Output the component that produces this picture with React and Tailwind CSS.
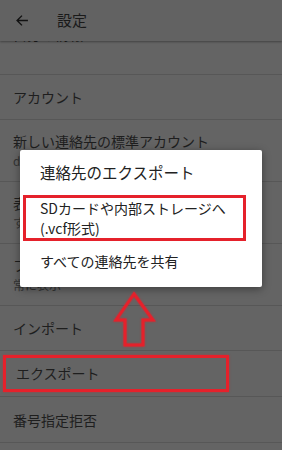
import React from "react";

const font = { fontFamily: '"Noto Sans CJK JP", "Noto Sans", sans-serif' };

function Row({ title, sub, h = "h-[45px]" }) {
  return (
    <div className={`${h} border-b border-[#575757] flex flex-col justify-center pl-[13px]`}>
      <div className="text-[14px] leading-[18px] text-[#1e1e1e]">{title}</div>
      {sub && <div className="text-[12px] leading-[16px] text-[#333] mt-[3px]">{sub}</div>}
    </div>
  );
}

export default function App() {
  return (
    <div style={font} className="relative w-[282px] h-[450px] overflow-hidden bg-[#646464]">
      <div className="relative z-10 h-[41px] bg-[#626262] flex items-center shadow-[0_1px_2px_rgba(0,0,0,0.35)]">
        <svg className="ml-[16px]" width="13" height="13" viewBox="0 0 24 24" fill="none" stroke="#111" strokeWidth="2.6">
          <path d="M22 12H3M11 3l-9 9 9 9" />
        </svg>
        <div className="ml-[28px] text-[15px] text-[#1a1a1a]">設定</div>
      </div>
      <div className="h-[34px] border-b border-[#575757] overflow-hidden relative">
        <div className="absolute left-[13px] top-[-16px] text-[14px] leading-[18px] text-[#1e1e1e]">自分の情報</div>
      </div>
      <Row title="アカウント" />
      <Row title="新しい連絡先の標準アカウント" sub="d●●●●●@gmail.com" h="h-[62px]" />
      <Row title="表示する連絡先" sub="すべての連絡先" h="h-[62px]" />
      <Row title="フォネティック名" sub="常に表示" h="h-[62px]" />
      <Row title="インポート" />
      <div className="h-[46px] border-b border-[#575757] flex items-center pl-[3px]">
        <div className="w-[226px] h-[37px] border-[3px] border-[#e5212b] flex items-center pl-[10px] text-[14px] text-[#1e1e1e] shadow-[0_0_2px_rgba(229,33,43,0.6)]">
          エクスポート
        </div>
      </div>
      <Row title="番号指定拒否" h="h-[46px]" />

      {/* dialog */}
      <div className="absolute left-[20px] top-[150px] w-[242px] h-[137px] bg-white shadow-[0_2px_8px_rgba(0,0,0,0.4)] rounded-[2px]">
        <div className="pl-[20px] pt-[12px] text-[15.5px] leading-[20px] text-[#222]">連絡先のエクスポート</div>
        <div className="ml-[3px] mt-[13px] w-[223px] h-[46px] border-[3px] border-[#e5212b] pl-[14px] text-[14px] leading-[20px] text-[#222]">
          <div>SDカードや内部ストレージへ</div>
          <div>(.vcf形式)</div>
        </div>
        <div className="pl-[20px] mt-[10px] text-[14px] leading-[20px] text-[#222]">すべての連絡先を共有</div>
      </div>

      {/* arrow */}
      <svg className="absolute left-[110px] top-[288px]" width="50" height="62" viewBox="110 288 50 62">
        <path
          d="M134 294 L153 320 L143 320 L143 345 L125 345 L125 320 L116 320 Z"
          fill="none"
          stroke="#e5212b"
          strokeWidth="3"
          strokeLinejoin="miter"
          style={{ filter: "drop-shadow(0 0 1px rgba(229,33,43,0.7))" }}
        />
      </svg>
    </div>
  );
}
